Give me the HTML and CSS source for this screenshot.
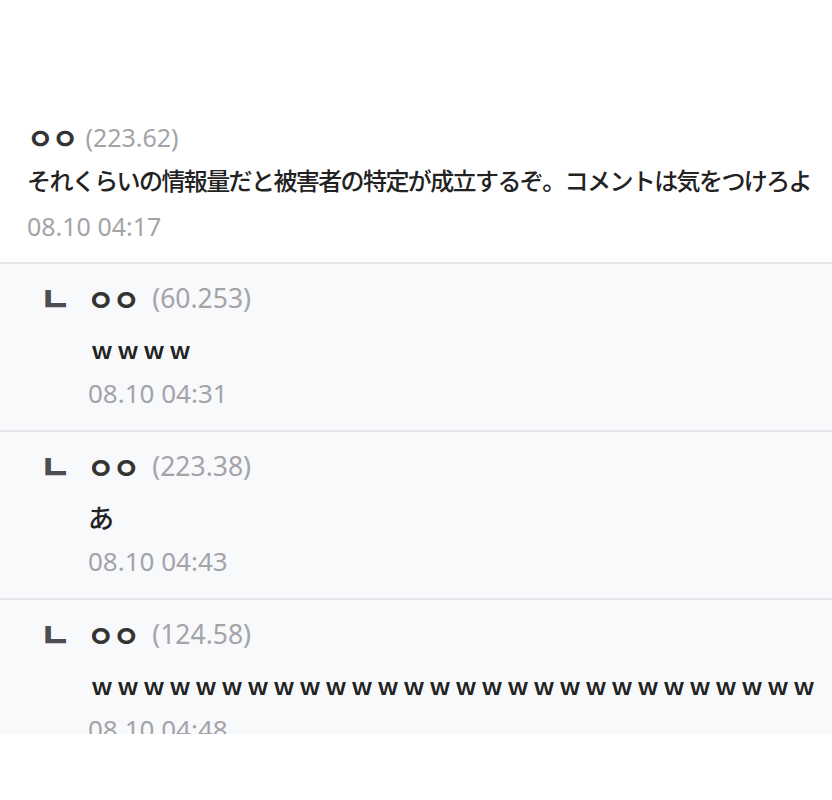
FILE: index.html
```html
<!DOCTYPE html>
<html lang="ko">
<head>
<meta charset="utf-8">
<title>댓글</title>
<link rel="stylesheet" href="styles.css">
</head>
<body>
<div class="thread">
  <div class="comment">
    <div class="meta"><span class="nick">ㅇㅇ</span><span class="ip">(223.62)</span></div>
    <p class="text" lang="ja">それくらいの情報量だと被害者の特定が成立するぞ。コメントは気をつけろよ</p>
    <div class="date">08.10 04:17</div>
  </div>
  <div class="reply">
    <span class="mark">ㄴ</span>
    <div class="body">
      <div class="meta"><span class="nick">ㅇㅇ</span><span class="ip">(60.253)</span></div>
      <p class="text wide" lang="ja">ｗｗｗｗ</p>
      <div class="date">08.10 04:31</div>
    </div>
  </div>
  <div class="reply">
    <span class="mark">ㄴ</span>
    <div class="body">
      <div class="meta"><span class="nick">ㅇㅇ</span><span class="ip">(223.38)</span></div>
      <p class="text" lang="ja">あ</p>
      <div class="date">08.10 04:43</div>
    </div>
  </div>
  <div class="reply">
    <span class="mark">ㄴ</span>
    <div class="body">
      <div class="meta"><span class="nick">ㅇㅇ</span><span class="ip">(124.58)</span></div>
      <p class="text wide" lang="ja">ｗｗｗｗｗｗｗｗｗｗｗｗｗｗｗｗｗｗｗｗｗｗｗｗｗｗｗｗ</p>
      <div class="date">08.10 04:48</div>
    </div>
  </div>
</div>
</body>
</html>
```
FILE: styles.css
```css
* { box-sizing: border-box; }
html, body { margin: 0; padding: 0; background: #ffffff; }
body {
  font-family: "Noto Sans", "Noto Sans CJK KR", sans-serif;
  color: #222;
}
.thread {
  height: 734px;
  overflow: hidden;
  padding-top: 122px;
  background: #fff;
}
.comment {
  padding: 0 0 21px 27px;
  background: #fff;
}
.meta {
  display: flex;
  align-items: center;
  height: 30px;
  gap: 9px;
  white-space: nowrap;
}
.nick {
  font-family: "Noto Sans CJK KR", sans-serif;
  font-weight: 700;
  font-size: 29px;
  line-height: 30px;
  color: #333;
  letter-spacing: -2px;
}
.ip {
  font-size: 25px;
  color: #a3a4a8;
}
.text {
  margin: 13px 0 0;
  height: 30px;
  line-height: 30px;
  font-family: "Noto Sans CJK JP", sans-serif;
  font-weight: 500;
  font-size: 24px;
  letter-spacing: -1.6px;
  white-space: nowrap;
  color: #222;
}
.date {
  margin-top: 16px;
  height: 30px;
  line-height: 30px;
  font-size: 25px;
  color: #a3a4a8;
}
.reply {
  display: flex;
  align-items: flex-start;
  padding: 19px 0 22px 40px;
  background: #f8f9fb;
  border-top: 2px solid #e4e6ea;
}
.mark {
  width: 48px;
  flex: none;
  height: 30px;
  line-height: 30px;
  font-family: "Noto Sans CJK KR", sans-serif;
  font-weight: 900;
  font-size: 34px;
  color: #4d4d52;
}
.reply .nick { font-size: 30px; margin-left: -1px; }
.reply .meta { gap: 14px; }
.reply .ip { font-size: 26.5px; }
.reply .text {
  margin-top: 21px;
  font-size: 26px;
  letter-spacing: 0;
}
.reply .text.wide {
  font-size: 22px;
  letter-spacing: 4px;
  font-weight: 700;
  padding-left: 3px;
}
.reply .date {
  margin-top: 14px;
  font-size: 26px;
}
```
